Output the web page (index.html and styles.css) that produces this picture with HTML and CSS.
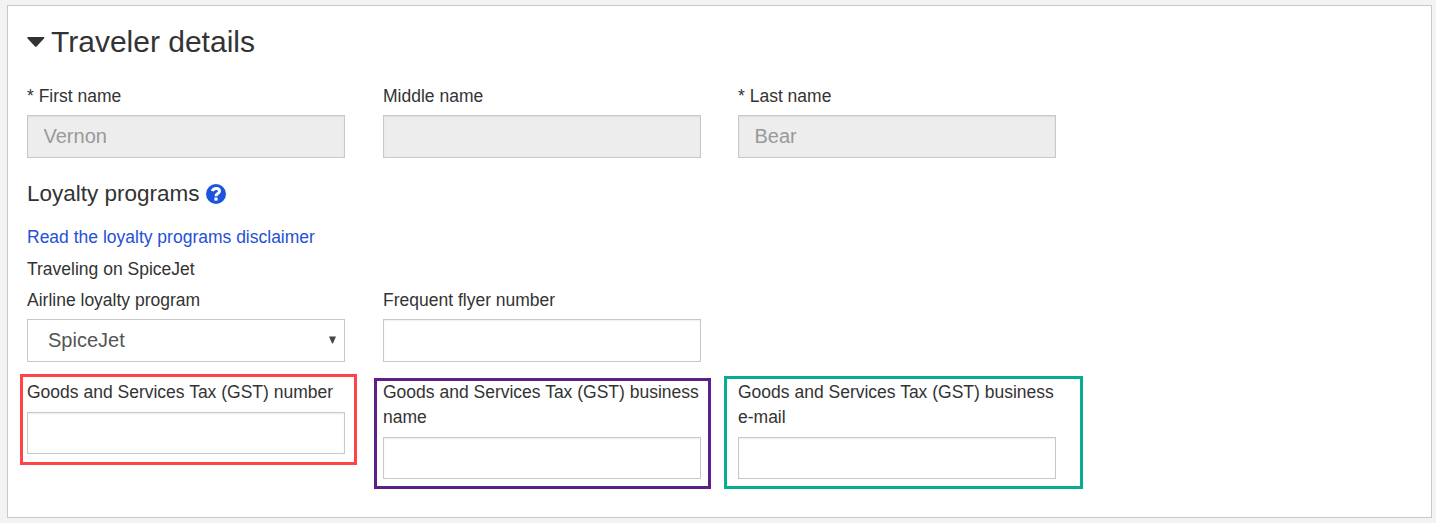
FILE: index.html
```html
<!DOCTYPE html>
<html lang="en">
<head>
<meta charset="utf-8">
<title>Traveler details</title>
<link rel="stylesheet" href="styles.css">
</head>
<body>
<main class="panel">
  <h1 class="title">
    <svg class="caret" viewBox="0 0 18 11"><path d="M0.2 0.6Q0.2 0 0.9 0H16.7Q17.4 0 17.4 0.6Q17.4 1 17 1.4L9.8 9.2Q8.8 10.2 7.8 9.2L0.6 1.4Q0.2 1 0.2 0.6Z"/></svg>
    <span>Traveler details</span>
  </h1>
  <div class="row">
    <div class="field"><label class="label" for="first">* First name</label><input class="input" id="first" value="Vernon" disabled></div>
    <div class="field"><label class="label" for="middle">Middle name</label><input class="input" id="middle" disabled></div>
    <div class="field"><label class="label" for="last">* Last name</label><input class="input" id="last" value="Bear" disabled></div>
  </div>
  <h2 class="subtitle">
    <span>Loyalty programs</span>
    <svg class="help" viewBox="0 0 20 20"><circle cx="10" cy="10" r="10"/><path class="hook" d="M6.3 7.1C6.9 5.2 8.2 4.4 10.1 4.4C12.3 4.4 13.5 5.6 13.5 7.2C13.5 9.6 10 9.5 10 12.2"/><path class="dot" d="M8.4 13.5h3.2v3.1H8.4z"/></svg>
  </h2>
  <a class="link">Read the loyalty programs disclaimer</a>
  <p class="airline">Traveling on SpiceJet</p>
  <div class="row loyalty">
    <div class="field">
      <label class="label" for="program">Airline loyalty program</label>
      <div class="select-wrap">
        <select class="input select" id="program"><option>SpiceJet</option></select>
        <svg class="arrow" viewBox="0 0 7 8"><path d="M0 0.5H7L3.9 7.5H3.1Z"/></svg>
      </div>
    </div>
    <div class="field"><label class="label" for="flyer">Frequent flyer number</label><input class="input" id="flyer"></div>
  </div>
  <div class="row gst">
    <div class="field mark-red"><label class="label" for="gst-number">Goods and Services Tax (GST) number</label><input class="input" id="gst-number"></div>
    <div class="field mark-purple"><label class="label" for="gst-name">Goods and Services Tax (GST) business<br>name</label><input class="input" id="gst-name"></div>
    <div class="field mark-teal"><label class="label" for="gst-email">Goods and Services Tax (GST) business<br>e-mail</label><input class="input" id="gst-email"></div>
  </div>
</main>
</body>
</html>
```
FILE: styles.css
```css
* { box-sizing: border-box; }
body {
  margin: 0;
  padding: 5px 4px 5px 7px;
  background: #f3f3f3;
  color: #333;
  font: 17.5px/25px "Liberation Sans", Arial, sans-serif;
}
.panel {
  height: 513px;
  padding: 15px 19px 0;
  background: #fff;
  border: 1px solid #c8c8c8;
}
.title {
  display: flex;
  align-items: center;
  gap: 6px;
  height: 42px;
  margin: 0 0 21px;
  font-size: 30px;
  font-weight: 400;
  line-height: 42px;
}
.caret { width: 18px; height: 11px; fill: #333; }
.row {
  display: grid;
  grid-template-columns: 356px 355px 318px;
  align-items: start;
}
.field { position: relative; width: 318px; }
.label { display: block; margin-bottom: 6px; white-space: nowrap; }
.input {
  display: block;
  width: 318px;
  height: 43px;
  padding: 0 15.5px;
  border: 1px solid #c8c8c8;
  border-radius: 0;
  background: #fff;
  box-shadow: inset 0 1px 2px rgba(0, 0, 0, .07);
  color: #555;
  font: 20px "Liberation Sans", Arial, sans-serif;
}
.input:disabled { background: #ededed; color: #999; }
.subtitle {
  display: flex;
  align-items: center;
  gap: 6px;
  height: 30px;
  margin: 21px 0 16px;
  font-size: 22.5px;
  font-weight: 400;
  line-height: 30px;
}
.help { width: 20px; height: 20px; fill: #1c54de; }
.hook { fill: none; stroke: #fff; stroke-width: 3; }
.dot { fill: #fff; }
.link { display: block; color: #2450d6; }
.airline { margin: 7px 0 6px; }
.select-wrap { position: relative; }
.select { appearance: none; padding: 0 20px 2px; box-shadow: none; }
.arrow {
  position: absolute;
  top: 17px;
  right: 9px;
  width: 7px;
  height: 8px;
  fill: #444;
}
.gst { margin-top: 18px; }
.gst .label { margin-bottom: 7px; }
.gst .input { height: 42px; }
.mark-red::after,
.mark-purple::after,
.mark-teal::after {
  content: "";
  position: absolute;
  border: 3px solid;
  pointer-events: none;
}
.mark-red::after { inset: -6px -12px -11px -7px; border-color: #ff4346; }
.mark-purple::after { inset: -2px -10px -10px -9px; border-color: #5f1f8a; }
.mark-teal::after { inset: -4px -27px -10px -14px; border-color: #05ae90; }
```
